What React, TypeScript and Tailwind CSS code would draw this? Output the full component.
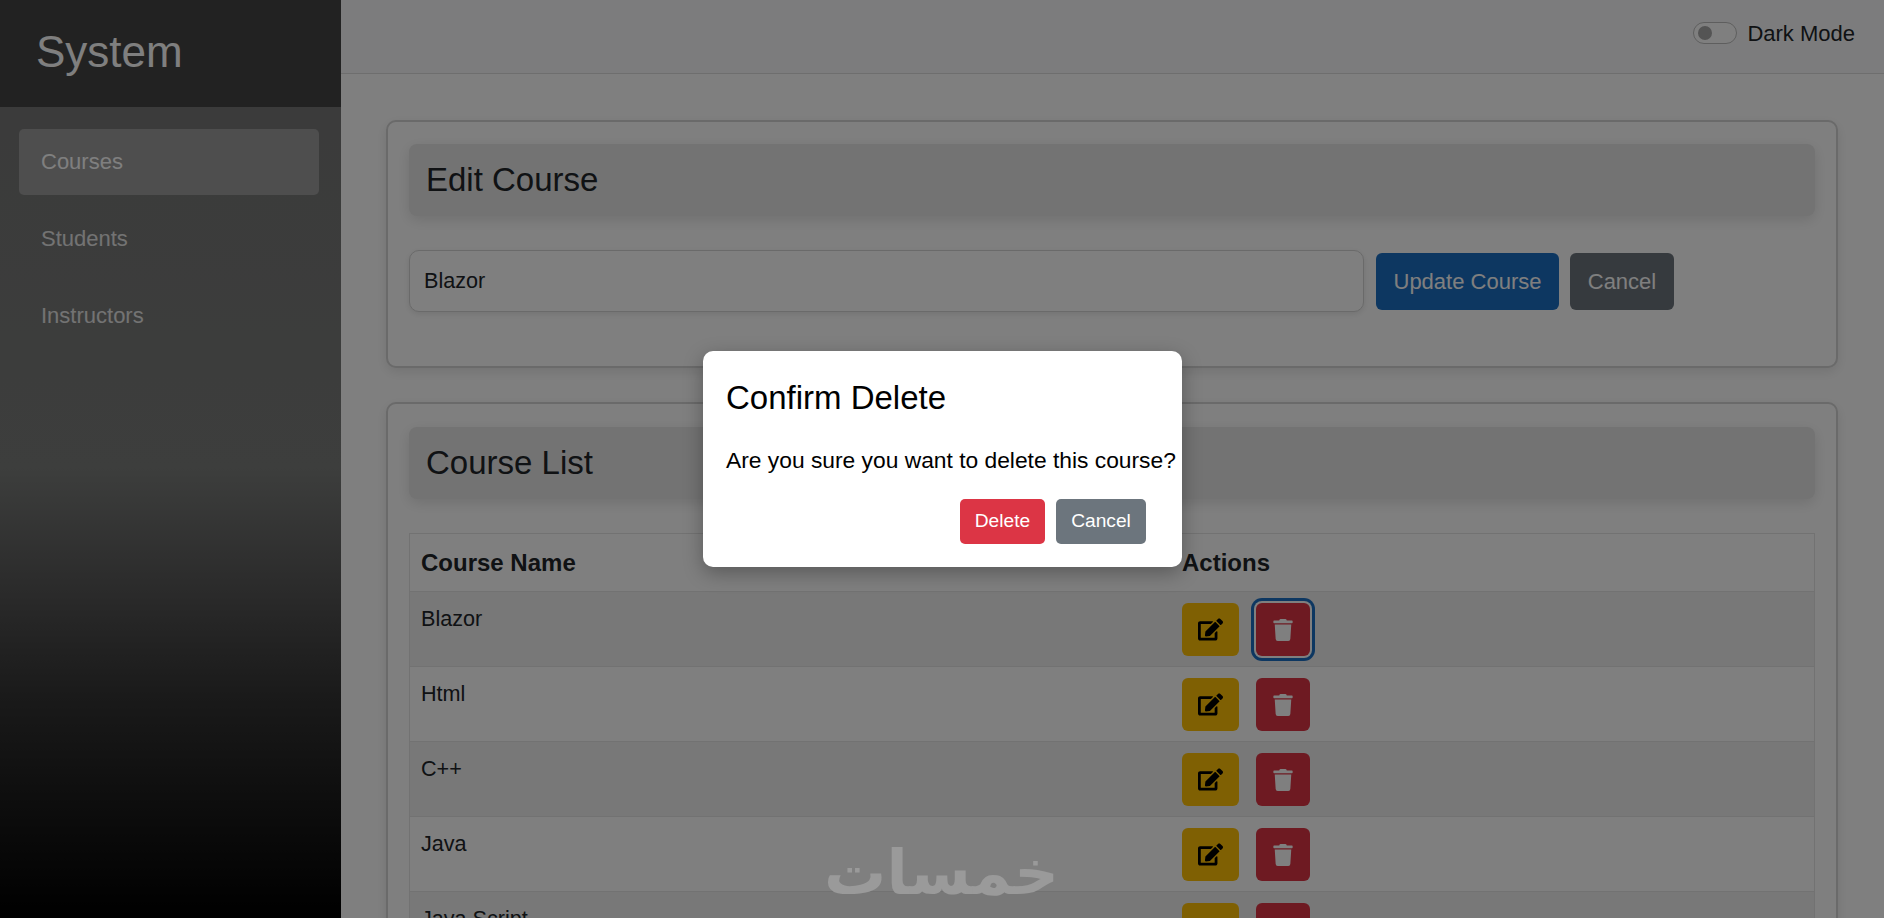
import { FaEdit, FaTrash } from 'react-icons/fa'

const COURSES = ['Blazor', 'Html', 'C++', 'Java', 'Java Script']

function SectionTitle({ title }: { title: string }) {
  return (
    <div className="flex h-[72px] items-center rounded-lg bg-[#e6e6e6] pl-[17px] text-[33px] text-[#212529] shadow-[0_4px_14px_rgba(0,0,0,0.12)]">
      {title}
    </div>
  )
}

function Sidebar() {
  return (
    <aside className="flex h-full w-[341px] shrink-0 flex-col bg-[linear-gradient(180deg,#757575_0%,#7a7c7a_51%,#545454_65%,#343434_76%,#1c1c1c_87%,#000000_100%)]">
      <div className="flex h-[107px] items-center bg-[#444444] pb-[4px] pl-[36px] text-[44px] text-white">System</div>
      <nav className="flex flex-col gap-[11px] pl-[19px] pr-[22px] pt-[22px] text-[22px]">
        <a className="flex h-[66px] items-center rounded-[5px] bg-[#9c9c9c] pb-[2px] pl-[22px] text-white">Courses</a>
        <a className="flex h-[66px] items-center pb-[2px] pl-[22px] text-[#e6e6e6]">Students</a>
        <a className="flex h-[66px] items-center pb-[2px] pl-[22px] text-[#e6e6e6]">Instructors</a>
      </nav>
    </aside>
  )
}

function CourseRow({ name, index }: { name: string; index: number }) {
  return (
    <div className={`flex h-[75px] border-t border-[#e4e4e4] ${index % 2 === 0 ? 'bg-[#f0f0f0]' : 'bg-white'}`}>
      <div className="w-[760px] shrink-0 pl-[11px] pt-[11px] leading-[32px]">{name}</div>
      <div className="flex items-start gap-[17px] pl-[12px] pt-[11px]">
        <button className="flex h-[53px] w-[57px] items-center justify-center rounded-[6px] bg-[#ffc107] text-black">
          <FaEdit size={25} />
        </button>
        <button
          className={`flex h-[53px] w-[54px] items-center justify-center rounded-[6px] bg-[#dc3545] text-white ${
            index === 0 ? 'shadow-[0_0_0_2px_#ffffff,0_0_0_5px_#1b6ec2]' : ''
          }`}
        >
          <FaTrash size={22} />
        </button>
      </div>
    </div>
  )
}

export default function App() {
  return (
    <div className="relative flex h-[918px] w-[1884px] overflow-hidden bg-white font-['Liberation_Sans',Arial,sans-serif] text-[21.6px] text-[#212529]">
      <Sidebar />
      <main className="flex min-w-0 flex-1 flex-col">
        <header className="flex h-[74px] shrink-0 items-center justify-end gap-[10px] border-b border-[#dcdcdc] bg-[#f8f9fa] pb-[7px] pr-[29px]">
          <span className="flex h-[22px] w-[44px] items-center rounded-full border border-[#bdbdbd] bg-white pl-[4px]">
            <span className="h-[14px] w-[14px] rounded-full bg-[#a8a8a8]" />
          </span>
          <span className="text-[22px]">Dark Mode</span>
        </header>

        <div className="flex flex-col gap-[34px] pl-[45px] pr-[46px] pt-[46px]">
          <section className="h-[248px] rounded-[10px] border-2 border-[#d4d4d4] bg-white px-[21px] pt-[22px] shadow-[0_4px_12px_rgba(0,0,0,0.1)]">
            <SectionTitle title="Edit Course" />
            <div className="mt-[34px] flex items-center">
              <div className="flex h-[62px] w-[955px] items-center rounded-[10px] border border-[#d4d4d4] bg-white pl-[14px] pt-[1px] shadow-[0_2px_6px_rgba(0,0,0,0.1)]">
                Blazor
              </div>
              <button className="ml-[12px] h-[57px] w-[183px] rounded-[6px] bg-[#1b6ec2] pt-[1px] text-[22px] text-white">Update Course</button>
              <button className="ml-[11px] h-[57px] w-[104px] rounded-[6px] bg-[#6c757d] pt-[1px] text-[22px] text-white">Cancel</button>
            </div>
          </section>

          <section className="rounded-[10px] border-2 border-[#d4d4d4] bg-white px-[21px] pt-[23px] shadow-[0_4px_12px_rgba(0,0,0,0.1)]">
            <SectionTitle title="Course List" />
            <div className="mt-[34px] border border-b-0 border-[#e4e4e4]">
              <div className="flex h-[57px] items-center text-[24px] font-bold">
                <div className="w-[760px] shrink-0 pl-[11px]">Course Name</div>
                <div className="pl-[12px]">Actions</div>
              </div>
              {COURSES.map((name, index) => (
                <CourseRow key={name} name={name} index={index} />
              ))}
            </div>
          </section>
        </div>
      </main>

      {/* backdrop and confirm dialog */}
      <div className="absolute inset-0 flex items-center justify-center bg-black/50">
        <div className="ml-[1px] h-[216px] w-[479px] rounded-[10px] bg-white px-[23px] pt-[25px] text-black shadow-[0_6px_20px_rgba(0,0,0,0.3)]">
          <h2 className="text-[33px] leading-[44px]">Confirm Delete</h2>
          <p className="mt-[24px] whitespace-nowrap text-[22.8px] leading-[32px]">Are you sure you want to delete this course?</p>
          <div className="mt-[23px] flex gap-[11px] pl-[234px] text-[19.2px] text-white">
            <button className="h-[45px] w-[85px] rounded-[5px] bg-[#dc3545]">Delete</button>
            <button className="h-[45px] w-[90px] rounded-[5px] bg-[#6c757d]">Cancel</button>
          </div>
        </div>
      </div>

      <div
        dir="rtl"
        className="absolute left-[835px] top-[833px] w-[224px] text-center font-['DejaVu_Sans',sans-serif] text-[62px] font-bold leading-[80px] text-[#9a9a9a]"
      >
        خمسات
      </div>
    </div>
  )
}
